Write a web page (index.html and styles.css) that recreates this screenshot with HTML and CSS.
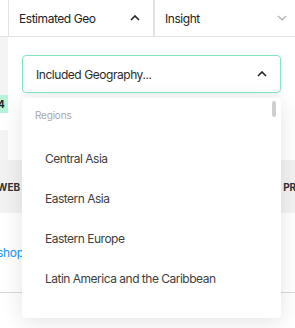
FILE: index.html
```html
<!DOCTYPE html>
<html lang="en">
<head>
    <meta charset="UTF-8">
    <meta name="viewport" content="width=device-width, initial-scale=1.0">
    <title>Estimated Geo</title>
    <link rel="stylesheet" href="styles.css">
</head>
<body>
    <div class="page">
        <header class="filter-bar">
            <div class="filter-edge"></div>
            <div class="filter-cell">
                <span>Estimated Geo</span>
                <svg class="chevron" width="10" height="6" viewBox="0 0 10 6"><path d="M1 5 L5 1 L9 5" fill="none" stroke="#222" stroke-width="1.6"/></svg>
            </div>
            <div class="filter-cell last">
                <span>Insight</span>
                <svg class="chevron" width="10" height="6" viewBox="0 0 10 6"><path d="M1 1 L5 5 L9 1" fill="none" stroke="#b0b0b0" stroke-width="1.2"/></svg>
            </div>
        </header>

        <main class="table">
            <div class="row row-top"><div class="cell-edge gray"></div></div>
            <div class="row row-chip"><div class="cell-edge chip">4</div></div>
            <div class="row row-gap"></div>
            <div class="row row-gray"><div class="cell-edge gray"></div></div>
            <div class="row row-head">
                <span>WEB</span>
                <span>PRI</span>
            </div>
            <div class="row row-link"><a href="#" class="shop-link">shop</a></div>
            <div class="row row-bottom"></div>
        </main>

        <div class="geo-dropdown">
            <div class="geo-select">
                <span>Included Geography...</span>
                <svg class="chevron" width="10" height="6" viewBox="0 0 10 6"><path d="M1 5 L5 1 L9 5" fill="none" stroke="#222" stroke-width="1.6"/></svg>
            </div>
            <div class="geo-menu">
                <div class="scroll-thumb"></div>
                <div class="group-label">Regions</div>
                <div class="option">Central Asia</div>
                <div class="option">Eastern Asia</div>
                <div class="option">Eastern Europe</div>
                <div class="option">Latin America and the Caribbean</div>
            </div>
        </div>
    </div>
</body>
</html>
```

FILE: styles.css
```css
* {
    margin: 0;
    padding: 0;
    box-sizing: border-box;
}

body {
    font-family: Inter, 'Noto Sans', sans-serif;
    background: #fff;
    color: #222;
    width: 295px;
    height: 328px;
    overflow: hidden;
}

.page {
    position: relative;
    height: 328px;
}

.filter-bar {
    display: flex;
    height: 37px;
    border-bottom: 1px solid #e2e2e2;
    background: #fff;
}

.filter-edge {
    width: 9px;
    border-right: 1px solid #e2e2e2;
}

.filter-cell {
    width: 146px;
    display: flex;
    align-items: center;
    justify-content: space-between;
    padding: 0 13px 0 10px;
    font-size: 12px;
    letter-spacing: -0.45px;
    border-right: 2px solid #e4e4e4;
}

.filter-cell.last {
    flex: 1;
    border-right: none;
    padding: 0 8px 0 10px;
}

.table {
    display: flex;
    flex-direction: column;
}

.row {
    display: flex;
}

.cell-edge {
    width: 8px;
}

.gray {
    background: #f4f4f4;
}

.row-top {
    height: 58px;
}

.row-chip {
    height: 18px;
}

.chip {
    background: #b6f3d7;
    font-size: 10px;
    font-weight: 700;
    line-height: 18px;
    text-indent: -2px;
    overflow: hidden;
}

.row-gap {
    height: 17px;
}

.row-gray {
    height: 30px;
}

.row-head {
    height: 53px;
    background: #f2f2f2;
    align-items: center;
    justify-content: space-between;
    font-size: 10px;
    font-weight: 700;
    color: #333;
    margin-left: -3px;
    margin-right: -4px;
}

.row-link {
    height: 80px;
    align-items: center;
    border-bottom: 1px solid #d8d8d8;
}

.shop-link {
    color: #2196f3;
    text-decoration: none;
    font-size: 12px;
    letter-spacing: -0.3px;
    margin-left: -3px;
}

.geo-dropdown {
    position: absolute;
    left: 22px;
    top: 55px;
    width: 259px;
}

.geo-select {
    height: 38px;
    display: flex;
    align-items: center;
    justify-content: space-between;
    padding: 0 13px 0 13px;
    border: 1px solid #7ee8bc;
    border-radius: 4px;
    background: #fff;
    font-size: 12px;
    letter-spacing: -0.45px;
    color: #2a2a2a;
    box-shadow: 0 2px 6px rgba(0, 0, 0, 0.05);
}

.geo-menu {
    position: relative;
    margin-top: 5px;
    height: 220px;
    padding: 10px 0 0 13px;
    background: #fff;
    border-radius: 4px;
    box-shadow: 0 4px 22px rgba(0, 0, 0, 0.11);
}

.scroll-thumb {
    position: absolute;
    top: 3px;
    right: 5px;
    width: 4px;
    height: 16px;
    border-radius: 2px;
    background: #cfcfcf;
}

.group-label {
    font-size: 10px;
    line-height: 14px;
    letter-spacing: -0.2px;
    color: #a8a8a8;
    margin-bottom: 16px;
}

.option {
    height: 40px;
    display: flex;
    align-items: center;
    padding-left: 10px;
    font-size: 12px;
    letter-spacing: -0.5px;
    color: #404040;
}
```
